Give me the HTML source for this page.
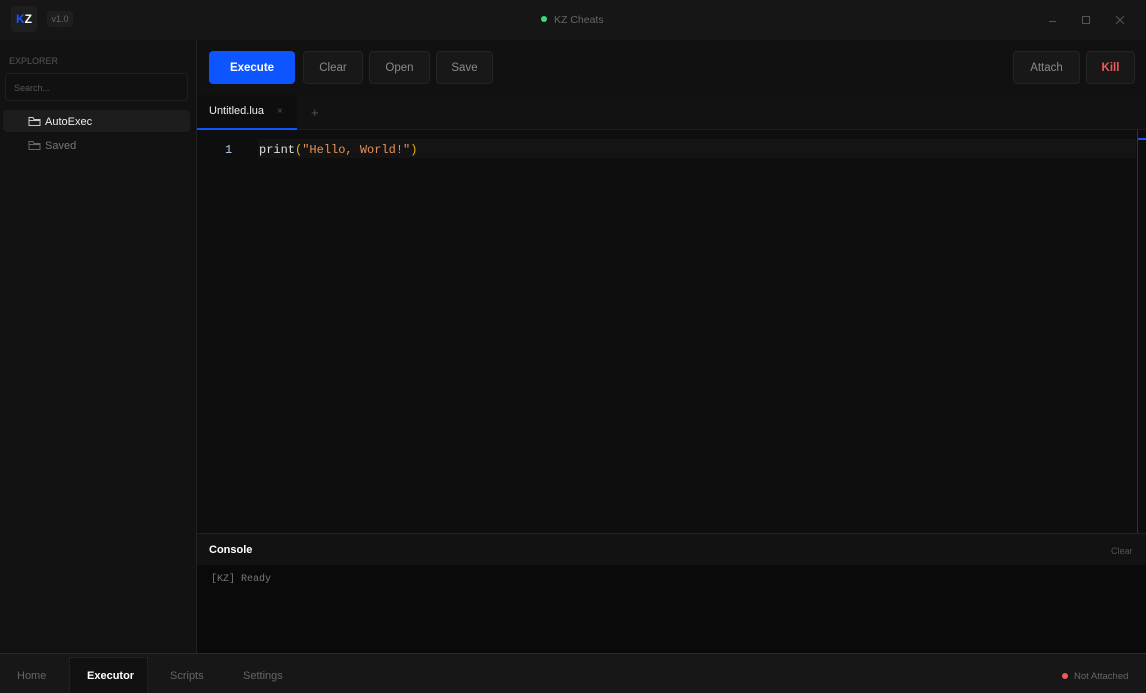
<!DOCTYPE html>
<html><head><style>
*{margin:0;padding:0;box-sizing:border-box}
body{width:1146px;height:693px;background:#111;font-family:"Liberation Sans",sans-serif;position:relative;overflow:hidden;color:#ddd}
.a{position:absolute}
.btn{position:absolute;top:51px;height:33px;border:1px solid #242424;background:#181818;border-radius:4px;color:#8a8a8a;font-size:11.5px;display:flex;align-items:center;justify-content:center;padding-top:1px}
.mono{font-family:"Liberation Mono",monospace}
</style></head><body>
<div class="a" style="left:0;top:0;width:1146px;height:40px;background:#161616"></div>
<div class="a" style="left:11px;top:6px;width:26px;height:26px;background:#1e1e1e;border-radius:4px;font-weight:bold;font-size:12px;line-height:26px;text-align:center"><span style="color:#1a55ff">K</span><span style="color:#fff">Z</span></div>
<div class="a" style="left:47px;top:11px;width:26px;height:16px;background:#1e1e1e;border-radius:3px;font-size:9px;color:#666;line-height:16px;text-align:center">v1.0</div>
<div class="a" style="left:541px;top:16px;width:6px;height:6px;border-radius:50%;background:#3ddc7a"></div>
<div class="a" style="left:554px;top:14px;font-size:10.5px;color:#666">KZ Cheats</div>
<div class="a" style="left:1049px;top:21px;width:7px;height:1px;background:#555"></div>
<div class="a" style="left:1082px;top:16px;width:8px;height:8px;border:1px solid #555"></div>
<svg class="a" style="left:1115px;top:15px" width="10" height="10" viewBox="0 0 10 10"><path d="M1 1L9 9M9 1L1 9" stroke="#555" stroke-width="1"/></svg>
<div class="a" style="left:0;top:40px;width:197px;height:613px;background:#121212;border-right:1px solid #222"></div>
<div class="a" style="left:9px;top:56px;font-size:9px;color:#555">EXPLORER</div>
<div class="a" style="left:5px;top:73px;width:183px;height:28px;border:1px solid #1f1f1f;border-radius:4px;background:#111;font-size:9px;color:#555;padding:9px 8px">Search...</div>
<div class="a" style="left:3px;top:110px;width:187px;height:22px;background:#1d1d1d;border-radius:4px"></div>
<svg class="a" style="left:28px;top:116px" width="13" height="11" viewBox="0 0 13 11"><path d="M1 2.5V9.5H12V3.5H6L5 1.5H1Z M1 4.5H12" fill="none" stroke="#ccc" stroke-width="1"/></svg>
<div class="a" style="left:45px;top:116px;font-size:11px;color:#eee">AutoExec</div>
<svg class="a" style="left:28px;top:140px" width="13" height="11" viewBox="0 0 13 11"><path d="M1 2.5V9.5H12V3.5H6L5 1.5H1Z M1 4.5H12" fill="none" stroke="#666" stroke-width="1"/></svg>
<div class="a" style="left:45px;top:140px;font-size:11px;color:#777">Saved</div>
<div class="btn" style="left:209px;width:86px;background:#0d55ff;border-color:#0d55ff;color:#fff;font-weight:bold">Execute</div>
<div class="btn" style="left:303px;width:60px">Clear</div>
<div class="btn" style="left:369px;width:61px">Open</div>
<div class="btn" style="left:436px;width:57px">Save</div>
<div class="btn" style="left:1013px;width:67px">Attach</div>
<div class="btn" style="left:1086px;width:49px;color:#f05a5a;font-weight:bold">Kill</div>
<div class="a" style="left:197px;top:95px;width:949px;height:35px;background:#121212;border-bottom:1px solid #1e1e1e"></div>
<div class="a" style="left:197px;top:95px;width:100px;height:35px;background:#0e0e0e;border-bottom:2px solid #0d55ff"></div>
<div class="a" style="left:209px;top:105px;font-size:11px;color:#eee">Untitled.lua</div>
<div class="a" style="left:277px;top:106px;font-size:10px;color:#555">×</div>
<div class="a" style="left:311px;top:105px;font-size:13px;color:#555">+</div>
<div class="a" style="left:197px;top:130px;width:949px;height:403px;background:#0e0e0e"></div>
<div class="a" style="left:258px;top:139px;width:878px;height:19px;background:#141414"></div>
<div class="a mono" style="left:225px;top:143px;font-size:12px;color:#b5cde8">1</div>
<div class="a mono" style="left:259px;top:143px;font-size:12px;color:#e0e0e0">print<span style="color:#e8b800">(</span><span style="color:#e8915a">"Hello, World!"</span><span style="color:#e8b800">)</span></div>
<div class="a" style="left:1137px;top:130px;width:1px;height:403px;background:#333"></div>
<div class="a" style="left:1138px;top:138px;width:8px;height:2px;background:#1a55ff"></div>
<div class="a" style="left:197px;top:533px;width:949px;height:32px;background:#121212;border-top:1px solid #222"></div>
<div class="a" style="left:209px;top:544px;font-size:11px;font-weight:bold;color:#fff">Console</div>
<div class="a" style="left:1111px;top:546px;font-size:9px;color:#555">Clear</div>
<div class="a" style="left:197px;top:565px;width:949px;height:88px;background:#0a0a0a"></div>
<div class="a mono" style="left:211px;top:574px;font-size:10px;color:#777">[KZ] Ready</div>
<div class="a" style="left:0;top:653px;width:1146px;height:40px;background:#171717;border-top:1px solid #2a2a2a"></div>
<div class="a" style="left:69px;top:657px;width:79px;height:36px;background:#111;border:1px dotted #2e2e2e;border-bottom:none"></div>
<div class="a" style="left:17px;top:670px;font-size:11px;color:#666">Home</div>
<div class="a" style="left:87px;top:670px;font-size:11px;font-weight:bold;color:#fff">Executor</div>
<div class="a" style="left:170px;top:670px;font-size:11px;color:#666">Scripts</div>
<div class="a" style="left:243px;top:670px;font-size:11px;color:#666">Settings</div>
<div class="a" style="left:1062px;top:673px;width:6px;height:6px;border-radius:50%;background:#f05a5a"></div>
<div class="a" style="left:1074px;top:671px;font-size:9.5px;color:#666">Not Attached</div>
</body></html>
